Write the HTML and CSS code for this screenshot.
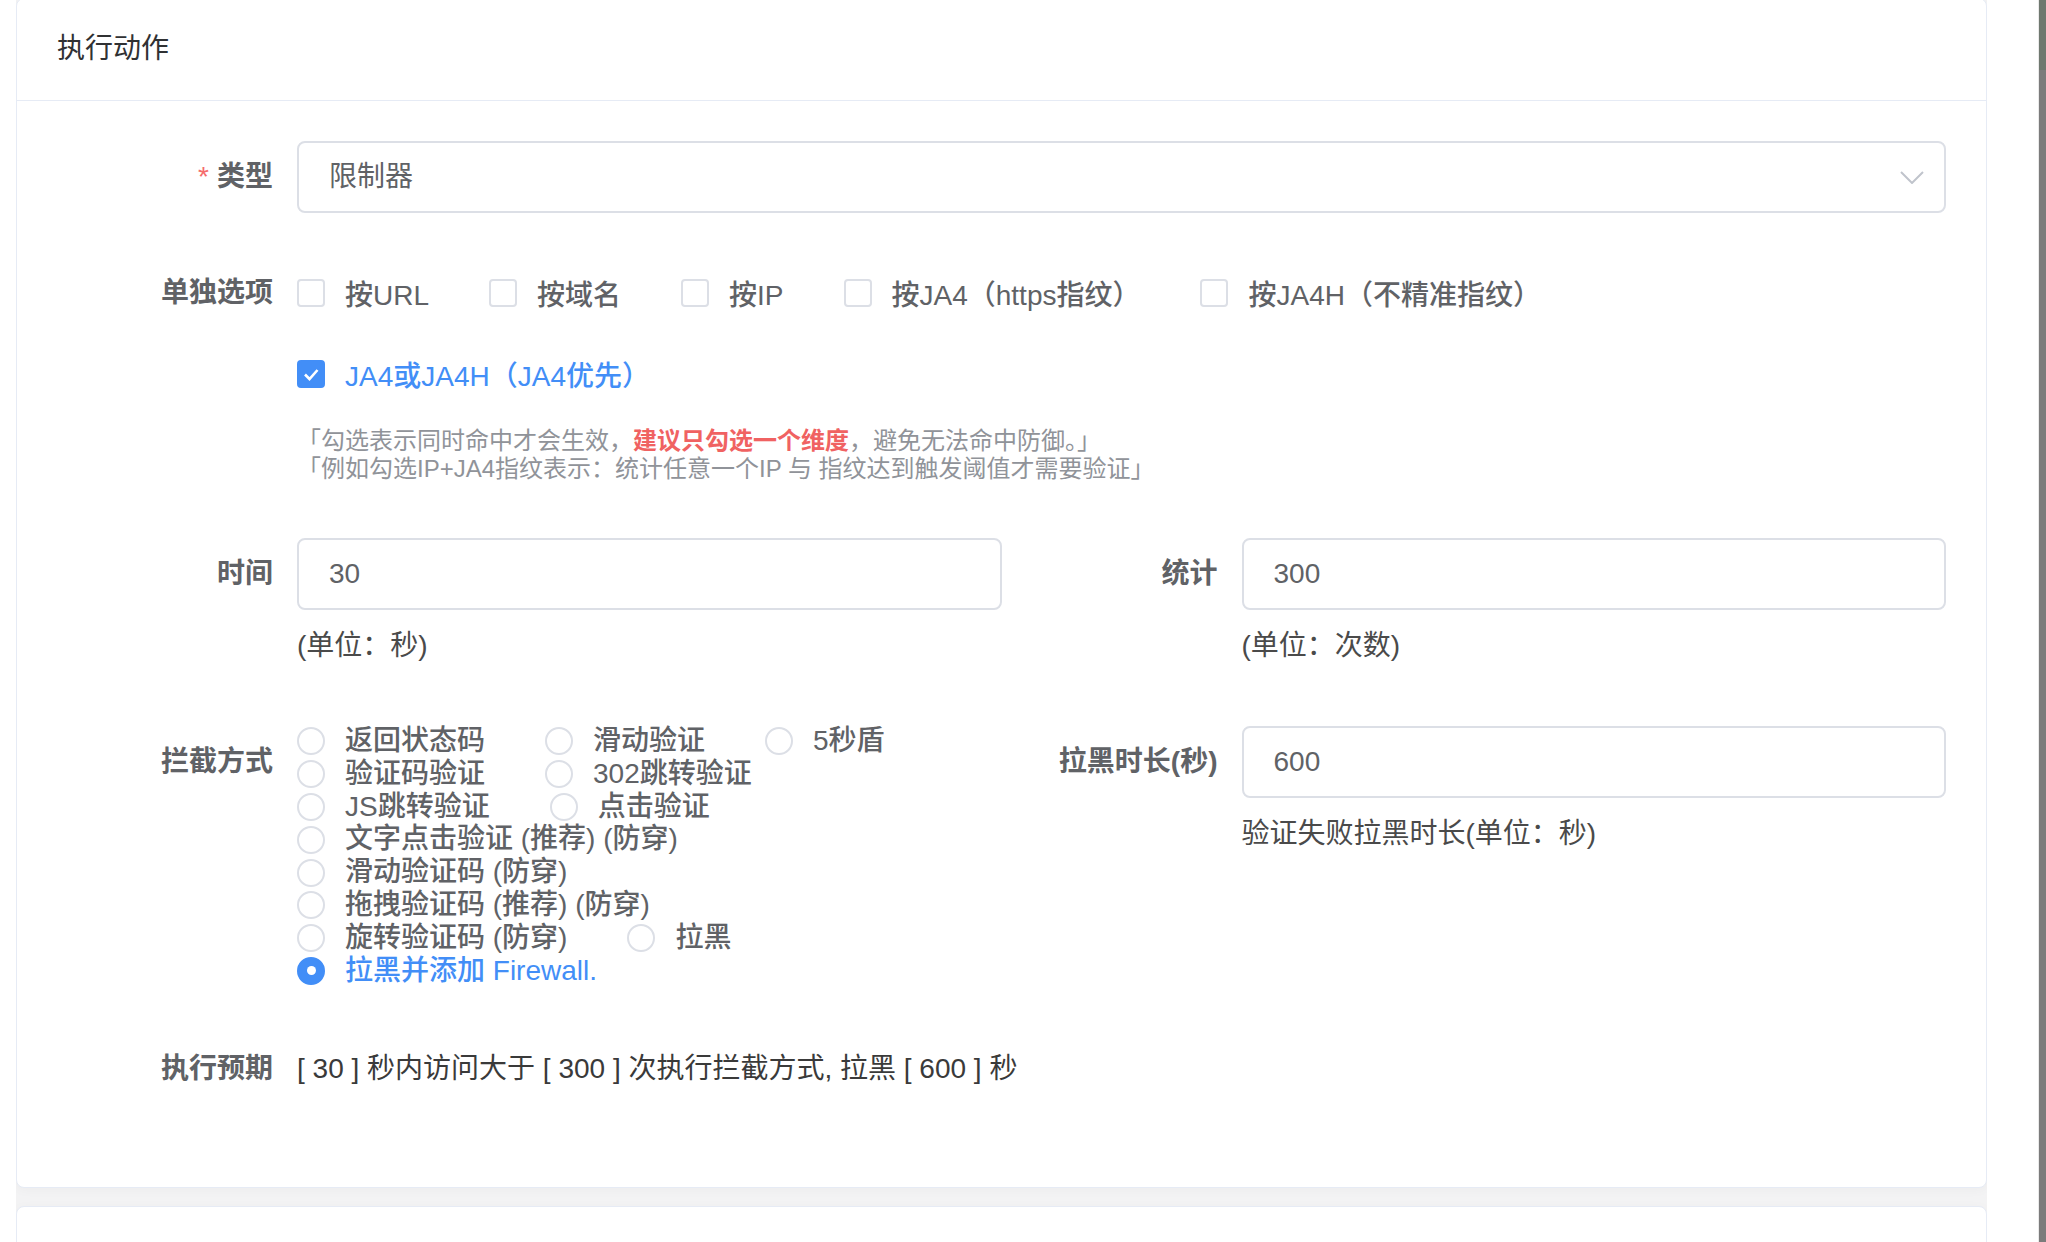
FILE: index.html
```html
<!DOCTYPE html>
<html lang="zh-CN">
<head>
    <meta charset="UTF-8">
    <meta name="viewport" content="width=device-width, initial-scale=1.0">
    <title>执行动作</title>
    <link rel="stylesheet" href="styles.css">
</head>
<body>
    <div class="page">
        <main class="main">
            <div class="cards">
                <div class="card">
                    <div class="card-header">执行动作</div>
                    <div class="card-body">
                        <form class="form">
                            <div class="form-item">
                                <label class="form-label required">类型</label>
                                <div class="form-content">
                                    <div class="select">
                                        <span class="select-value">限制器</span>
                                        <svg class="select-arrow" viewBox="0 0 24 13" width="24" height="13">
                                            <polyline points="1,1 12,12 23,1" fill="none" stroke="#c0c4cc" stroke-width="2"/>
                                        </svg>
                                    </div>
                                </div>
                            </div>

                            <div class="form-item">
                                <label class="form-label">单独选项</label>
                                <div class="form-content">
                                    <div class="check-row">
                                        <span class="checkbox"><span class="check-box"></span><span class="check-text">按URL</span></span>
                                        <span class="checkbox"><span class="check-box"></span><span class="check-text">按域名</span></span>
                                        <span class="checkbox"><span class="check-box"></span><span class="check-text">按IP</span></span>
                                        <span class="checkbox"><span class="check-box"></span><span class="check-text">按JA4（https指纹）</span></span>
                                        <span class="checkbox"><span class="check-box"></span><span class="check-text">按JA4H（不精准指纹）</span></span>
                                    </div>
                                    <div class="check-row check-row-second">
                                        <span class="checkbox is-checked">
                                            <span class="check-box">
                                                <svg viewBox="0 0 28 28" width="28" height="28">
                                                    <polyline points="8,14.5 12.5,19 20.5,10" fill="none" stroke="#fff" stroke-width="2.6"/>
                                                </svg>
                                            </span>
                                            <span class="check-text">JA4或JA4H（JA4优先）</span>
                                        </span>
                                    </div>
                                    <div class="hint">
                                        「勾选表示同时命中才会生效，<span class="hint-warn">建议只勾选一个维度</span>，避免无法命中防御。」<br>
                                        「例如勾选IP+JA4指纹表示：统计任意一个IP 与 指纹达到触发阈值才需要验证」
                                    </div>
                                </div>
                            </div>

                            <div class="form-row">
                                <div class="form-item">
                                    <label class="form-label">时间</label>
                                    <div class="form-content">
                                        <div class="input">30</div>
                                        <div class="form-note">(单位：秒)</div>
                                    </div>
                                </div>
                                <div class="form-item">
                                    <label class="form-label">统计</label>
                                    <div class="form-content">
                                        <div class="input">300</div>
                                        <div class="form-note">(单位：次数)</div>
                                    </div>
                                </div>
                            </div>

                            <div class="form-row">
                                <div class="form-item">
                                    <label class="form-label">拦截方式</label>
                                    <div class="form-content">
                                        <div class="radio-group">
                                            <span class="radio"><span class="radio-dot"></span><span class="radio-text">返回状态码</span></span>
                                            <span class="radio"><span class="radio-dot"></span><span class="radio-text">滑动验证</span></span>
                                            <span class="radio"><span class="radio-dot"></span><span class="radio-text">5秒盾</span></span>
                                            <span class="radio"><span class="radio-dot"></span><span class="radio-text">验证码验证</span></span>
                                            <span class="radio"><span class="radio-dot"></span><span class="radio-text">302跳转验证</span></span>
                                            <span class="radio"><span class="radio-dot"></span><span class="radio-text">JS跳转验证</span></span>
                                            <span class="radio"><span class="radio-dot"></span><span class="radio-text">点击验证</span></span>
                                            <span class="radio"><span class="radio-dot"></span><span class="radio-text">文字点击验证 (推荐) (防穿)</span></span>
                                            <span class="radio"><span class="radio-dot"></span><span class="radio-text">滑动验证码 (防穿)</span></span>
                                            <span class="radio"><span class="radio-dot"></span><span class="radio-text">拖拽验证码 (推荐) (防穿)</span></span>
                                            <span class="radio"><span class="radio-dot"></span><span class="radio-text">旋转验证码 (防穿)</span></span>
                                            <span class="radio"><span class="radio-dot"></span><span class="radio-text">拉黑</span></span>
                                            <span class="radio is-checked"><span class="radio-dot"></span><span class="radio-text">拉黑并添加 Firewall.</span></span>
                                        </div>
                                    </div>
                                </div>
                                <div class="form-item">
                                    <label class="form-label">拉黑时长(秒)</label>
                                    <div class="form-content">
                                        <div class="input">600</div>
                                        <div class="form-note">验证失败拉黑时长(单位：秒)</div>
                                    </div>
                                </div>
                            </div>

                            <div class="form-item">
                                <label class="form-label">执行预期</label>
                                <div class="form-content">
                                    <div class="summary">[ 30 ] 秒内访问大于 [ 300 ] 次执行拦截方式, 拉黑 [ 600 ] 秒</div>
                                </div>
                            </div>
                        </form>
                    </div>
                </div>
                <div class="card card-next"></div>
            </div>
        </main>
        <div class="scrollbar"></div>
    </div>
</body>
</html>
```

FILE: styles.css
```css
html, body {
    margin: 0;
    padding: 0;
    height: 100%;
    overflow: hidden;
}

body {
    font-family: "Helvetica Neue", Helvetica, "Liberation Sans", "Noto Sans CJK SC", sans-serif;
    font-size: 28px;
    color: #606266;
    background: #fff;
}

.page {
    display: flex;
    height: 100%;
}

.main {
    flex: 1;
    height: 100%;
    overflow: hidden;
    padding: 0 51px 0 16px;
}

.cards {
    margin-top: -2px;
    background: #f3f3f4;
    height: calc(100% + 2px);
    overflow: hidden;
}

.card {
    background: #fff;
    border: 1px solid #e6ebf5;
    border-radius: 8px;
    box-shadow: 0 2px 12px rgba(0, 0, 0, 0.03);
}

.card-next {
    margin-top: 18px;
    height: 200px;
}

.card-header {
    padding: 34px 40px 35px;
    line-height: 32px;
    color: #303133;
    border-bottom: 1px solid #e6ebf5;
}

.card-body {
    padding: 40px 40px 38px;
}

.form-item {
    display: flex;
    margin-bottom: 44px;
}

.form-row {
    display: grid;
    grid-template-columns: 1fr 1fr;
}

.form-label {
    flex: 0 0 240px;
    box-sizing: border-box;
    padding-right: 24px;
    text-align: right;
    line-height: 72px;
    font-weight: 600;
    color: #606266;
}

.form-label.required::before {
    content: "*";
    color: #f56c6c;
    margin-right: 8px;
    font-weight: 400;
}

.form-content {
    flex: 1;
    min-width: 0;
}

.select, .input {
    box-sizing: border-box;
    height: 72px;
    border: 2px solid #dcdfe6;
    border-radius: 8px;
    padding: 0 30px;
    line-height: 68px;
    color: #606266;
    background: #fff;
}

.select {
    display: flex;
    justify-content: space-between;
    align-items: center;
}

.select-arrow {
    margin-right: -10px;
}

.form-note {
    line-height: 72px;
    color: #4a4a4a;
}

.check-row {
    display: flex;
    align-items: center;
    height: 72px;
}

.check-row-second {
    margin-top: 9px;
}

.checkbox, .radio {
    display: inline-flex;
    align-items: center;
    margin-right: 60px;
    font-weight: 500;
    white-space: nowrap;
}

.check-box {
    box-sizing: border-box;
    width: 28px;
    height: 28px;
    border: 2px solid #dcdfe6;
    border-radius: 4px;
    background: #fff;
    position: relative;
}

.check-box svg {
    position: absolute;
    left: -2px;
    top: -2px;
}

.checkbox.is-checked .check-box {
    background: #428ef7;
    border-color: #428ef7;
}

.check-text, .radio-text {
    padding-left: 20px;
}

.is-checked .check-text, .is-checked .radio-text {
    color: #428ef7;
}

.hint {
    margin-top: 17px;
    margin-bottom: 12px;
    font-size: 24px;
    line-height: 27.5px;
    color: #909399;
}

.hint-warn {
    color: #f06262;
    font-weight: 600;
}

.radio-group {
    display: flex;
    flex-wrap: wrap;
    width: 690px;
    margin-top: -1px;
    margin-bottom: 2px;
}

.radio {
    height: 32.8px;
    line-height: 32.8px;
}

.radio-dot {
    box-sizing: border-box;
    width: 28px;
    height: 28px;
    border: 2px solid #dcdfe6;
    border-radius: 50%;
    background: #fff;
    display: flex;
    align-items: center;
    justify-content: center;
}

.radio.is-checked .radio-dot {
    background: #428ef7;
    border-color: #428ef7;
}

.radio.is-checked .radio-dot::after {
    content: "";
    width: 9px;
    height: 9px;
    border-radius: 50%;
    background: #fff;
}

.summary {
    line-height: 72px;
    color: #3a3a3a;
}

.scrollbar {
    width: 7px;
    background: linear-gradient(#6f786f 0, #6f786f 70px, #7b7b7b 70px);
    border-left: 1px solid #e9e9e9;
}
```
